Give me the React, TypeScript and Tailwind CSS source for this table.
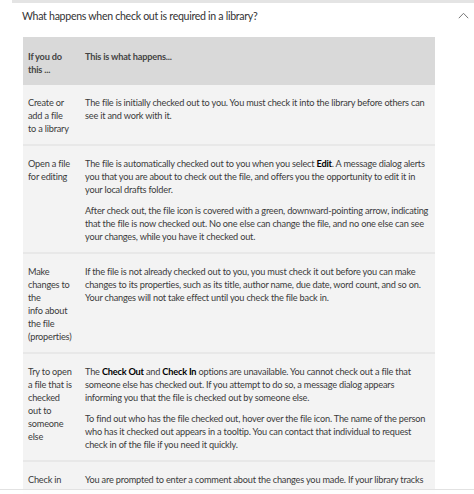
import React from "react";

type Row = {
    action: string[];
    paras: React.ReactNode[][];
};

const rows: Row[] = [
    {
        action: ["Create or", "add a file", "to a library"],
        paras: [
            [
                "The file is initially checked out to you. You must check it into the library before others can",
                "see it and work with it.",
            ],
        ],
    },
    {
        action: ["Open a file", "for editing"],
        paras: [
            [
                <>The file is automatically checked out to you when you select <b className="font-bold text-black">Edit</b>. A message dialog alerts</>,
                "you that you are about to check out the file, and offers you the opportunity to edit it in",
                "your local drafts folder.",
            ],
            [
                "After check out, the file icon is covered with a green, downward-pointing arrow, indicating",
                "that the file is now checked out. No one else can change the file, and no one else can see",
                "your changes, while you have it checked out.",
            ],
        ],
    },
    {
        action: ["Make", "changes to", "the", "info about", "the file", "(properties)"],
        paras: [
            [
                "If the file is not already checked out to you, you must check it out before you can make",
                "changes to its properties, such as its title, author name, due date, word count, and so on.",
                "Your changes will not take effect until you check the file back in.",
            ],
        ],
    },
    {
        action: ["Try to open", "a file that is", "checked", "out to", "someone", "else"],
        paras: [
            [
                <>The <b className="font-bold text-black">Check Out</b> and <b className="font-bold text-black">Check In</b> options are unavailable. You cannot check out a file that</>,
                "someone else has checked out. If you attempt to do so, a message dialog appears",
                "informing you that the file is checked out by someone else.",
            ],
            [
                "To find out who has the file checked out, hover over the file icon. The name of the person",
                "who has it checked out appears in a tooltip. You can contact that individual to request",
                "check in of the file if you need it quickly.",
            ],
        ],
    },
    {
        action: ["Check in"],
        paras: [
            ["You are prompted to enter a comment about the changes you made. If your library tracks"],
        ],
    },
];

export default function App() {
    return (
        <div className="relative w-[474px] h-[494px] overflow-hidden bg-white text-[#3b3b3b] font-['Lato',sans-serif]">
            {/* bottom of the previous section */}
            <div className="ml-3 h-[3px] bg-[#e4e4e4]" />

            {/* Question heading */}
            <div className="flex items-center justify-between h-[28px] pl-[22px] pr-[5px]">
                <h2 className="text-[10.6px] tracking-[-0.3px] text-[#333]">
                    What happens when check out is required in a library?
                </h2>
                <svg width="11" height="7" viewBox="0 0 11 7" fill="none" className="mb-[3px]">
                    <path d="M0.8 6.2 L5.5 1.3 L10.2 6.2" stroke="#777" strokeWidth="1" />
                </svg>
            </div>

            {/* Table */}
            <div className="mt-[6px] ml-[23px] w-[412px] text-[9.2px] tracking-[-0.2px] leading-[13px]">
                <div className="flex h-[48px] pt-[13px] bg-[#d9d9d9] font-bold text-[#444]">
                    <div className="w-[62px] pl-[5px] shrink-0">
                        If you do
                        <br />
                        this ...
                    </div>
                    <div className="flex-1">This is what happens...</div>
                </div>

                {rows.map((row, i) => (
                    <div key={i} className="flex pt-[11px] pb-[9px] bg-[#f3f3f3] border-b-2 border-[#e8e8e8]">
                        <div className="w-[62px] pl-[5px] shrink-0 whitespace-nowrap">
                            {row.action.map((l, j) => (
                                <div key={j}>{l}</div>
                            ))}
                        </div>
                        <div className="flex-1 flex flex-col gap-2 whitespace-nowrap">
                            {row.paras.map((p, j) => (
                                <p key={j}>
                                    {p.map((l, k) => (
                                        <span key={k} className="block">{l}</span>
                                    ))}
                                </p>
                            ))}
                        </div>
                    </div>
                ))}
            </div>

            {/* sticky footer edge */}
            <div className="absolute left-0 right-0 bottom-0 h-[5px] bg-white/90 border-t border-[#e2e2e2]" />
        </div>
    );
}
